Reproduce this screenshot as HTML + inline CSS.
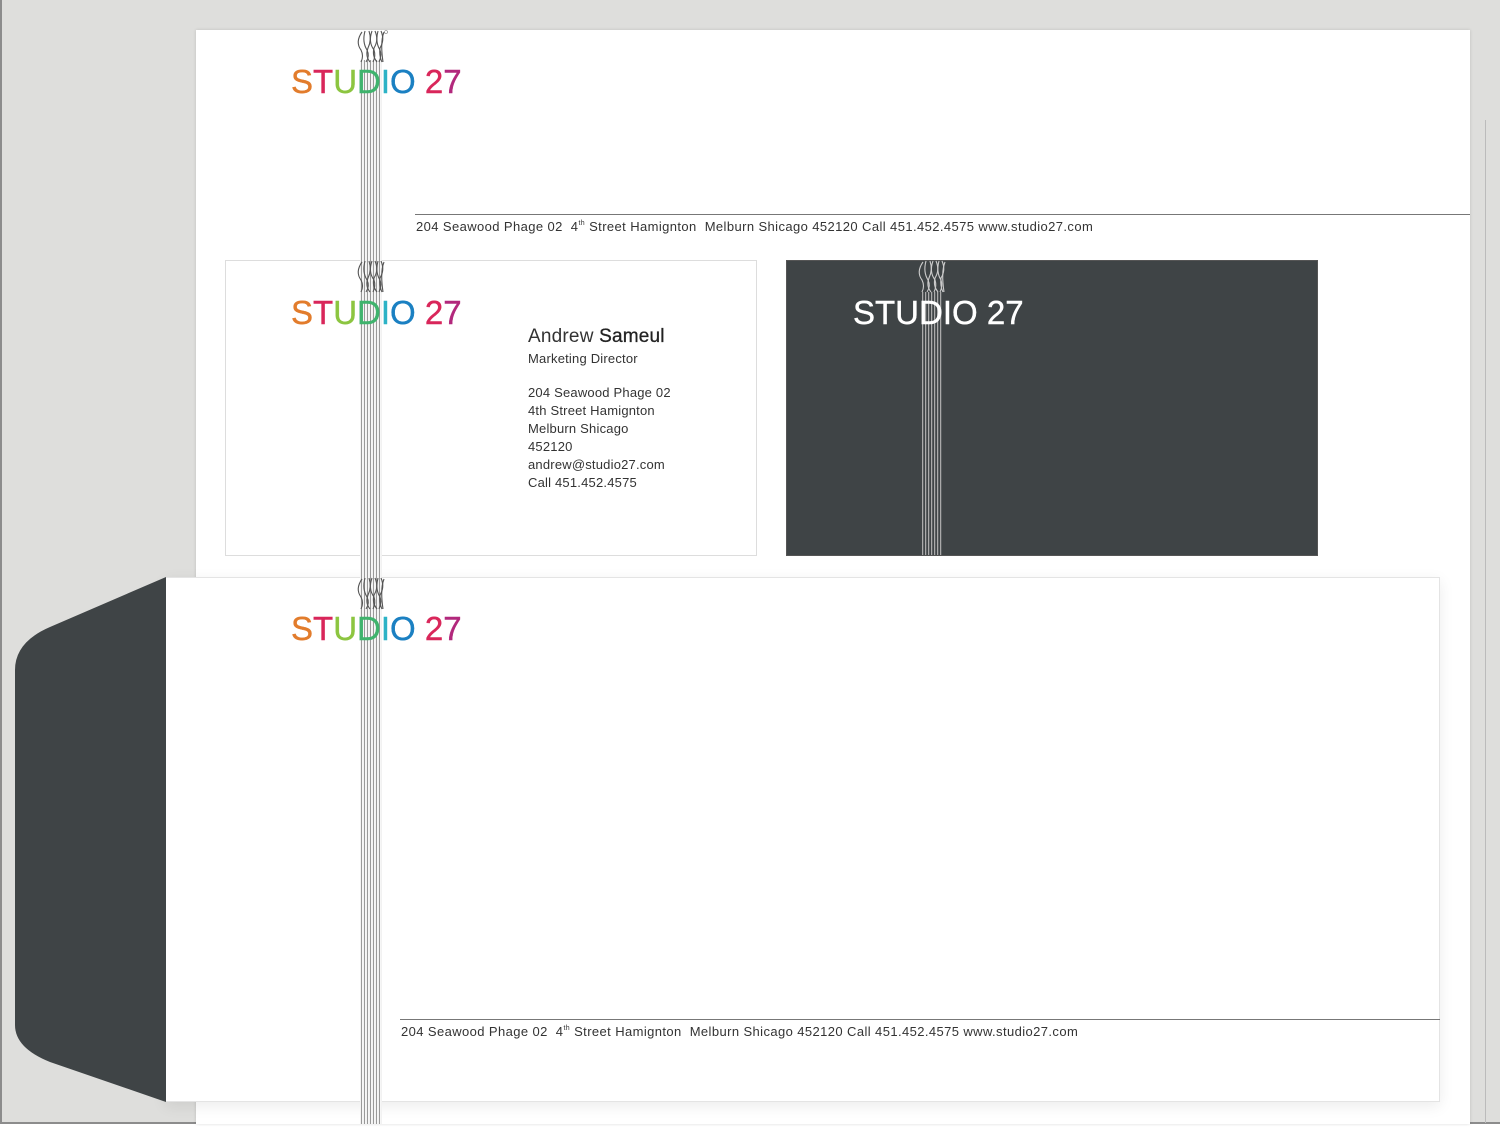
<!DOCTYPE html>
<html><head><meta charset="utf-8"><style>
*{margin:0;padding:0;box-sizing:border-box}
body{width:1500px;height:1141px;position:relative;overflow:hidden;background:#fff;font-family:"Liberation Sans",sans-serif;color:#333}
.abs{position:absolute}
.logo{position:absolute;font-size:33px;letter-spacing:0;line-height:34px;white-space:nowrap;z-index:5;-webkit-text-stroke:0.4px}
.strip{position:absolute;width:22px;background:repeating-linear-gradient(90deg,#f2f2f2 0,#f2f2f2 1px,#999 1px,#999 2px,#f6f6f6 2px,#f6f6f6 3px);z-index:3}
.addr{position:absolute;font-size:13px;color:#333;white-space:nowrap;z-index:4;letter-spacing:0.4px}
.addr sup{font-size:7px;vertical-align:6px}
</style></head><body>
<div class="abs" style="left:0;top:0;width:1500px;height:1124px;background:#dededc;border-left:2px solid #8c8c8c;border-bottom:2px solid #8c8c8c"></div>
<div class="abs" style="left:1485px;top:120px;width:1px;height:1003px;background:#bbb"></div>
<div class="abs" style="left:196px;top:30px;width:1274px;height:1094px;background:#fff;box-shadow:0 0 3px rgba(0,0,0,.15)"></div>
<div class="abs" style="left:415px;top:214px;width:1055px;height:1px;background:#777;z-index:4"></div>
<div class="addr" style="left:416px;top:219px">204 Seawood Phage 02&nbsp; 4<sup>th</sup> Street Hamignton&nbsp; Melburn Shicago 452120 Call 451.452.4575 www.studio27.com</div>

<div class="abs" style="left:225px;top:260px;width:532px;height:296px;background:#fff;border:1px solid #ddd;z-index:2"></div>
<div class="abs" style="left:528px;top:326px;z-index:4;font-size:13px;line-height:18px;color:#333;letter-spacing:0.2px">
<div style="font-size:19px;line-height:22px;margin-bottom:2px">Andrew <span style="color:#222;-webkit-text-stroke:0.3px">Sameul</span></div>
<div>Marketing Director</div><div style="height:16px"></div>
<div>204 Seawood Phage 02</div><div>4th Street Hamignton</div><div>Melburn Shicago</div><div>452120</div><div>andrew@studio27.com</div><div>Call 451.452.4575</div></div>

<div class="abs" style="left:786px;top:260px;width:532px;height:296px;background:#3f4446;border:1px solid #555;z-index:2"></div>
<div class="strip" style="left:921px;top:292px;height:263px;background:repeating-linear-gradient(90deg,#3f4446 0,#3f4446 1px,#aaa 1px,#aaa 2px,#5a5e60 2px,#5a5e60 3px)"></div>
<div class="logo" style="left:853px;top:296px;color:#fff">STUDIO 27</div>

<div class="abs" style="left:165px;top:577px;width:1275px;height:525px;background:#fff;border:1px solid #e4e4e4;box-shadow:0 4px 14px rgba(0,0,0,.08);z-index:2"></div>
<svg class="abs" style="left:0;top:570px;z-index:2" width="170" height="540"><path d="M166 7 L50 57 Q15 72 15 100 L15 455 Q15 478 50 492 L166 532 Z" fill="#3f4446"/></svg>
<div class="abs" style="left:400px;top:1019px;width:1040px;height:1px;background:#777;z-index:4"></div>
<div class="addr" style="left:401px;top:1024px">204 Seawood Phage 02&nbsp; 4<sup>th</sup> Street Hamignton&nbsp; Melburn Shicago 452120 Call 451.452.4575 www.studio27.com</div>

<div class="strip" style="left:360px;top:60px;height:1064px"></div>

<svg class="abs" style="left:352px;top:28px;z-index:6" width="40" height="36"><g fill="none" stroke="#555" stroke-width="1.1"><path d="M10 4 Q3 14 9 22 Q12 28 9 34"/><path d="M13 3 Q10 14 15 22 Q18 28 14 34"/><path d="M17 3 Q20 12 16 20 Q13 28 18 34"/><path d="M20 3 Q16 14 22 22 Q24 28 21 34"/><path d="M23 3 Q27 12 22 20 Q20 28 25 34"/><path d="M26 3 Q23 14 28 22 Q30 28 27 34"/><path d="M29 3 Q33 12 28 20 Q27 28 30 34"/><path d="M32 4 Q28 14 31 34"/></g><circle cx="34" cy="4" r="1.5" fill="none" stroke="#777" stroke-width=".6"/></svg>
<svg class="abs" style="left:352px;top:258px;z-index:6" width="40" height="36"><g fill="none" stroke="#555" stroke-width="1.1"><path d="M10 4 Q3 14 9 22 Q12 28 9 34"/><path d="M13 3 Q10 14 15 22 Q18 28 14 34"/><path d="M17 3 Q20 12 16 20 Q13 28 18 34"/><path d="M20 3 Q16 14 22 22 Q24 28 21 34"/><path d="M23 3 Q27 12 22 20 Q20 28 25 34"/><path d="M26 3 Q23 14 28 22 Q30 28 27 34"/><path d="M29 3 Q33 12 28 20 Q27 28 30 34"/><path d="M32 4 Q28 14 31 34"/></g></svg>
<svg class="abs" style="left:352px;top:575px;z-index:6" width="40" height="36"><g fill="none" stroke="#555" stroke-width="1.1"><path d="M10 4 Q3 14 9 22 Q12 28 9 34"/><path d="M13 3 Q10 14 15 22 Q18 28 14 34"/><path d="M17 3 Q20 12 16 20 Q13 28 18 34"/><path d="M20 3 Q16 14 22 22 Q24 28 21 34"/><path d="M23 3 Q27 12 22 20 Q20 28 25 34"/><path d="M26 3 Q23 14 28 22 Q30 28 27 34"/><path d="M29 3 Q33 12 28 20 Q27 28 30 34"/><path d="M32 4 Q28 14 31 34"/></g></svg>
<svg class="abs" style="left:913px;top:258px;z-index:6" width="40" height="36"><g fill="none" stroke="#ccc" stroke-width="1.1"><path d="M10 4 Q3 14 9 22 Q12 28 9 34"/><path d="M13 3 Q10 14 15 22 Q18 28 14 34"/><path d="M17 3 Q20 12 16 20 Q13 28 18 34"/><path d="M20 3 Q16 14 22 22 Q24 28 21 34"/><path d="M23 3 Q27 12 22 20 Q20 28 25 34"/><path d="M26 3 Q23 14 28 22 Q30 28 27 34"/><path d="M29 3 Q33 12 28 20 Q27 28 30 34"/><path d="M32 4 Q28 14 31 34"/></g></svg>

<div class="logo" style="left:291px;top:65px"><span style="color:#e27c2c">S</span><span style="color:#d9265a">T</span><span style="color:#8cc540">U</span><span style="color:#3fb36d">D</span><span style="color:#2cb3c6">I</span><span style="color:#1b80c2">O</span> <span style="color:#d9265a">2</span><span style="color:#b2287c">7</span></div>
<div class="logo" style="left:291px;top:296px"><span style="color:#e27c2c">S</span><span style="color:#d9265a">T</span><span style="color:#8cc540">U</span><span style="color:#3fb36d">D</span><span style="color:#2cb3c6">I</span><span style="color:#1b80c2">O</span> <span style="color:#d9265a">2</span><span style="color:#b2287c">7</span></div>
<div class="logo" style="left:291px;top:612px"><span style="color:#e27c2c">S</span><span style="color:#d9265a">T</span><span style="color:#8cc540">U</span><span style="color:#3fb36d">D</span><span style="color:#2cb3c6">I</span><span style="color:#1b80c2">O</span> <span style="color:#d9265a">2</span><span style="color:#b2287c">7</span></div>
</body></html>
